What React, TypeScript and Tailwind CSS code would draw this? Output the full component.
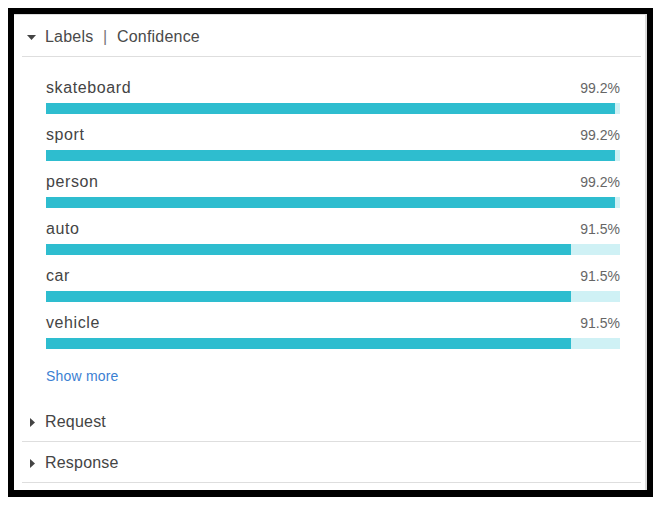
const labels = [
  { name: "skateboard", score: 99.2 },
  { name: "sport", score: 99.2 },
  { name: "person", score: 99.2 },
  { name: "auto", score: 91.5 },
  { name: "car", score: 91.5 },
  { name: "vehicle", score: 91.5 },
];

const CaretDown = () => (
  <svg width="9" height="5" viewBox="0 0 9 5" className="fill-[#444]">
    <path d="M0 0h9L4.5 5z" />
  </svg>
);

const CaretRight = () => (
  <svg width="5" height="9" viewBox="0 0 5 9" className="fill-[#444]">
    <path d="M0 0l5 4.5L0 9z" />
  </svg>
);

const CollapsedSection = ({ title }: { title: string }) => (
  <div className="ml-2 mr-1 flex h-[41px] items-center border-b border-[#dedede] pl-[8px] pt-[2px]">
    <div className="flex w-[15px] justify-start">
      <CaretRight />
    </div>
    <span className="text-[16px] tracking-[0.2px] text-[#444]">{title}</span>
  </div>
);

export default function App() {
  return (
    <div className="min-h-[505px] bg-white font-['Liberation_Sans',Arial,sans-serif]">
      <div className="ml-2 mt-2 h-[489px] w-[645px] border-[6px] border-b-[7px] border-black">
        <div className="flex h-full flex-col border-t border-r-2 border-[#dcdcdc] bg-white">
          <div className="ml-2 mr-1 flex h-[42px] items-center border-b border-[#dedede] pl-[5px] pt-[3px]">
            <div className="flex w-[18px]">
              <CaretDown />
            </div>
            <span className="text-[16px] tracking-[0.2px] text-[#4a4a4a]">
              Labels <span className="mx-[5px] text-[#777]">|</span> Confidence
            </span>
          </div>

          <div className="flex flex-col gap-[12px] pl-[32px] pr-[25px] pt-[22px]">
            {labels.map((l) => (
              <div key={l.name} className="flex flex-col">
                <div className="flex h-[20px] items-baseline justify-between">
                  <span className="text-[16px] leading-[17px] tracking-[0.6px] text-[#444]">{l.name}</span>
                  <span className="text-[14px] leading-[17px] text-[#666]">{l.score.toFixed(1)}%</span>
                </div>
                <div className="mt-[4px] h-[11px] w-full bg-[#cff1f5]">
                  <div className="h-full bg-[#2ebdcf]" style={{ width: `${l.score}%` }} />
                </div>
              </div>
            ))}
            <div className="mt-[5px] h-[20px] text-[14px] leading-[20px] tracking-[0.2px] text-[#3b80d2]">
              Show more
            </div>
          </div>

          <div className="mt-[15px]">
            <CollapsedSection title="Request" />
            <CollapsedSection title="Response" />
          </div>
        </div>
      </div>
    </div>
  );
}
